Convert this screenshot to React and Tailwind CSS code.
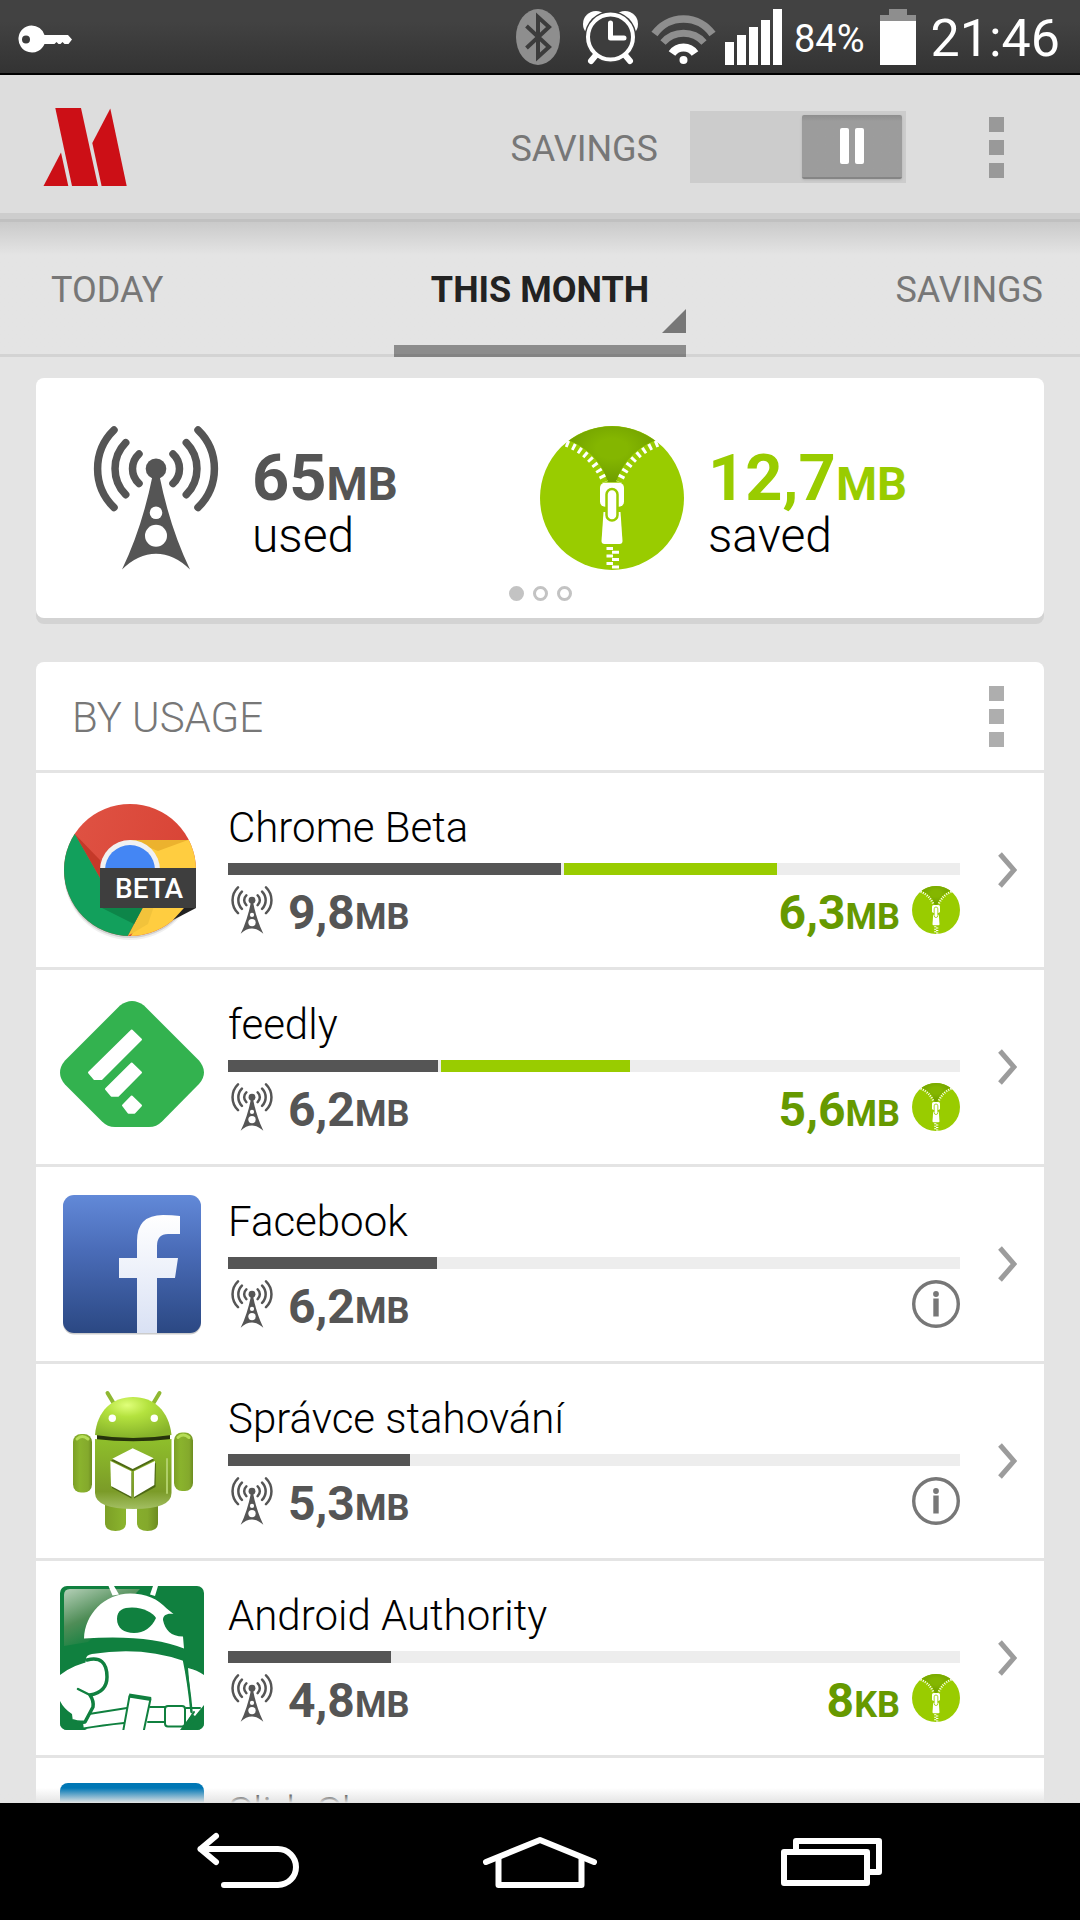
import { useState } from 'react';
import clsx from 'clsx';

const BAR_TOTAL = 732;

const apps = [
    { name: 'Chrome Beta', used: '9,8', usedBar: 333, saved: '6,3', savedUnit: 'MB', savedBar: 213, icon: ChromeBetaIcon },
    { name: 'feedly', used: '6,2', usedBar: 210, saved: '5,6', savedUnit: 'MB', savedBar: 189, icon: FeedlyIcon },
    { name: 'Facebook', used: '6,2', usedBar: 209, icon: FacebookIcon },
    { name: 'Správce stahování', used: '5,3', usedBar: 182, icon: DownloadsIcon },
    { name: 'Android Authority', used: '4,8', usedBar: 163, saved: '8', savedUnit: 'KB', icon: AuthorityIcon },
    { name: 'SlideShare', icon: SlideShareIcon },
];

const tabs = ['TODAY', 'THIS MONTH', 'SAVINGS'];

export default function App() {
    return (
        <div className="flex h-screen flex-col overflow-hidden bg-[#e4e4e4] font-['Roboto',sans-serif] text-black">
            <StatusBar />
            <Header />
            <Tabs />
            <main className="relative min-h-0 flex-1 overflow-hidden px-9 pt-[21px]">
                <Summary />
                <UsageList />
                <div className="absolute inset-x-0 bottom-0 h-[15px] bg-linear-to-b from-transparent to-[#e4e4e4]" />
            </main>
            <SystemNav />
        </div>
    );
}

function StatusBar() {
    return (
        <div className="flex h-[75px] shrink-0 items-center justify-between border-b-2 border-black bg-linear-to-b from-[#424242] from-30% to-[#333] pr-5 pl-4 text-white">
            <svg width="56" height="30" viewBox="0 0 56 30" className="mt-1" role="img" aria-label="VPN">
                <path
                    d="M15.500 1.500a13.500 13.500 0 0 1 13 9.500H52l4 4.500-3.500 4.500h-4l-2-2-2 2h-2l-2-2-2 2H28.500A13.500 13.500 0 1 1 15.500 1.500ZM10 11.500a4 4 0 1 0 0 8 4 4 0 0 0 0-8Z"
                    fill="#fff"
                    fillRule="evenodd"
                />
            </svg>
            <div className="flex items-center">
                <svg width="44" height="56" viewBox="0 0 44 56" role="img" aria-label="Bluetooth">
                    <ellipse cx="22" cy="28" rx="22" ry="28" fill="#8e8e8e" />
                    <path d="M10.500 17 33 38 22 48V8l11 10-22.500 21" fill="none" stroke="#3c3c3c" strokeWidth="4" />
                </svg>
                <svg width="55" height="56" viewBox="0 -2 55 56" className="ml-[23px]" role="img" aria-label="Alarm">
                    <circle cx="13" cy="13" r="13" fill="#fff" />
                    <circle cx="42" cy="13" r="13" fill="#fff" />
                    <circle cx="27.500" cy="26" r="26" fill="#3d3d3d" />
                    <path d="m13 44-5 6M42 44l5 6" stroke="#fff" strokeWidth="6" strokeLinecap="round" />
                    <circle cx="27.500" cy="26" r="22.500" fill="#3d3d3d" stroke="#fff" strokeWidth="4" />
                    <path d="M27.500 12v15H41" fill="none" stroke="#fff" strokeWidth="5" strokeLinecap="round" strokeLinejoin="round" />
                </svg>
                <svg width="65" height="56" viewBox="0 -7 65 56" className="ml-[13px]" fill="none" role="img" aria-label="Wi-Fi">
                    <path d="M3.500 18a35.500 35.500 0 0 1 58 0" stroke="#8e8e8e" strokeWidth="7.500" />
                    <path d="M12 26.500a27.500 27.500 0 0 1 41 0" stroke="#8e8e8e" strokeWidth="7" />
                    <path d="M21 37.500a14 14 0 0 1 23 0" stroke="#fff" strokeWidth="8" />
                    <circle cx="32.500" cy="44" r="4" fill="#fff" />
                </svg>
                <svg width="57" height="56" viewBox="0 0 57 56" className="ml-[9px]" fill="#fff" role="img" aria-label="Signal">
                    <path d="M0 33h9v23H0zM12 26h9v30h-9zM24 18h9v38h-9zM36 11h9v45h-9zM48 0h9v56h-9z" />
                </svg>
                <span className="ml-3 pt-1 text-[38px] leading-[56px]">84%</span>
                <svg width="36" height="56" viewBox="0 0 36 56" className="ml-[15px]" role="img" aria-label="Battery">
                    <path d="M9 0h18v6h9v6H0V6h9Z" fill="#8e8e8e" />
                    <path d="M0 12h36v44H0z" fill="#fff" />
                </svg>
                <span className="ml-[15px] pt-1 text-[52px] leading-[56px]">21:46</span>
            </div>
        </div>
    );
}

function Header() {
    const [on, setOn] = useState(true);

    return (
        <header className="flex h-[144px] shrink-0 items-center justify-between border-b-6 border-[#cdcdcd] bg-[#ddd] pt-1.5 pr-[68px] pl-9">
            <svg width="96" height="78" viewBox="0 0 96 78" fill="#cc0f16" role="img" aria-label="Opera Max">
                <path d="M19.300 0H45L62 78H36Z" />
                <path d="M25 44.500 32.300 78H7.500Z" />
                <path d="M74.300.5 90.700 78H65.600L56.300 35Z" />
            </svg>
            <div className="flex items-center">
                <label className="flex cursor-pointer items-center gap-8">
                    <span className="pt-1 text-[36px] leading-[48px] text-[#777]">SAVINGS</span>
                    <input
                        type="checkbox"
                        role="switch"
                        className="peer sr-only"
                        checked={on}
                        onChange={(e) => setOn(e.target.checked)}
                    />
                    <span className="flex h-[72px] w-[216px] bg-[#ccc] p-1 peer-checked:justify-end">
                        <span className="flex h-16 w-[100px] items-center justify-center gap-1.5 rounded-xs border-b-2 border-[#858585] bg-linear-to-b from-[#8e8e8e] to-[#9c9c9c] to-10% shadow-sm">
                            <span className="h-9 w-[9px] rounded-xs bg-white" />
                            <span className="h-9 w-[9px] rounded-xs bg-white" />
                        </span>
                    </span>
                </label>
                <MenuButton label="More options" className="ml-[75px] text-[#999]" />
            </div>
        </header>
    );
}

function MenuButton({ label, className }) {
    return (
        <button type="button" aria-label={label} className={clsx('flex flex-col gap-2 px-2', className)}>
            <span className="size-[15px] bg-current" />
            <span className="size-[15px] bg-current" />
            <span className="size-[15px] bg-current" />
        </button>
    );
}

function Tabs() {
    const [active, setActive] = useState('THIS MONTH');

    return (
        <div className="h-[138px] shrink-0 border-t-3 border-b-3 border-t-[#c0c0c0] border-b-[#d3d3d3] bg-linear-to-b from-[#cacaca] to-[#e4e4e4] to-[33px]">
            <div role="tablist" className="grid h-[135px] grid-cols-[1fr_292px_1fr]">
                {tabs.map((tab, i) => (
                    <button
                        key={tab}
                        type="button"
                        role="tab"
                        aria-selected={tab === active}
                        onClick={() => setActive(tab)}
                        className={clsx(
                            'relative text-[36px] leading-[48px]',
                            i === 0 && 'pl-[51px] text-left',
                            i === 2 && 'pr-[37px] text-right',
                            tab === active ? 'font-bold text-[#222]' : 'text-[#777]'
                        )}
                    >
                        {tab}
                        {tab === active && (
                            <>
                                <svg width="24" height="24" viewBox="0 0 24 24" className="absolute right-0 bottom-6" aria-hidden="true">
                                    <path d="M24 0v24H0Z" fill="#777" />
                                </svg>
                                <span className="absolute inset-x-0 bottom-0 h-3 border-b-3 border-[#838383] bg-[#8c8c8c]" />
                            </>
                        )}
                    </button>
                ))}
            </div>
        </div>
    );
}

function Summary() {
    const [page, setPage] = useState(0);

    return (
        <section className="rounded-lg bg-white pt-12 pb-[17px] shadow-[0_6px_0_#d3d3d3]">
            <div className="grid grid-cols-2">
                <div className="flex gap-6 pl-12">
                    <AntennaIcon className="size-[144px]" />
                    <div className="pt-5">
                        <p className="text-[65px] leading-[65px] font-bold text-[#555]">
                            65<span className="text-[47px] leading-none">MB</span>
                        </p>
                        <p className="text-[48px] leading-[50px] font-light">used</p>
                    </div>
                </div>
                <div className="flex gap-6">
                    <ZipperIcon className="size-[144px]" />
                    <div className="pt-5">
                        <p className="text-[65px] leading-[65px] font-bold text-[#9c0]">
                            12,7<span className="text-[47px] leading-none">MB</span>
                        </p>
                        <p className="text-[48px] leading-[50px] font-light">saved</p>
                    </div>
                </div>
            </div>
            <div className="mt-4 flex justify-center gap-[9px]">
                {[0, 1, 2].map((n) => (
                    <button
                        key={n}
                        type="button"
                        aria-label={`Page ${n + 1}`}
                        onClick={() => setPage(n)}
                        className={clsx('size-[15px] rounded-full border-3 border-[#c3c3c3]', n === page && 'bg-[#c3c3c3]')}
                    />
                ))}
            </div>
        </section>
    );
}

function UsageList() {
    return (
        <section className="mt-11 rounded-t-lg bg-white">
            <div className="flex h-[108px] items-center justify-between pr-8 pl-9">
                <h2 className="pt-1 text-[42px] leading-[60px] font-light text-[#777]">BY USAGE</h2>
                <MenuButton label="List options" className="text-[#aeaeae]" />
            </div>
            <ul>
                {apps.map((app) => (
                    <UsageRow key={app.name} app={app} />
                ))}
            </ul>
        </section>
    );
}

function UsageRow({ app }) {
    const Icon = app.icon;

    return (
        <li className="border-t-3 border-[#e4e4e4]">
            <a href="#" className="flex h-[194px] items-center gap-6 pr-[27px] pl-6">
                <Icon />
                <div className="h-[144px] min-w-0 flex-1">
                    <p className="truncate text-[42px] leading-[60px] font-light">{app.name}</p>
                    {app.used && <Usage app={app} />}
                </div>
                <svg width="33" height="40" viewBox="0 0 33 40" className="shrink-0" fill="none" aria-hidden="true">
                    <path d="m16 4 14 16-14 16" stroke="#9c9c9c" strokeWidth="5" />
                </svg>
            </a>
        </li>
    );
}

function Usage({ app }) {
    return (
        <>
            <div className="mt-[5px] flex h-3 gap-[3px] bg-[#ededed]">
                <div className="bg-[#555]" style={{ width: `${(app.usedBar / BAR_TOTAL) * 100}%` }} />
                {app.savedBar && (
                    <div className="bg-[#9c0]" style={{ width: `${(app.savedBar / BAR_TOTAL) * 100}%` }} />
                )}
            </div>
            <div className="mt-[11px] flex items-start gap-3">
                <AntennaIcon className="size-12" />
                <Amount value={app.used} unit="MB" className="text-[#555]" />
                <span className="flex-1" />
                {app.saved ? (
                    <>
                        <Amount value={app.saved} unit={app.savedUnit} className="text-[#690]" />
                        <ZipperIcon className="size-12" />
                    </>
                ) : (
                    <InfoIcon />
                )}
            </div>
        </>
    );
}

function Amount({ value, unit, className }) {
    return (
        <span className={clsx('text-[48px] leading-[54px] font-bold', className)}>
            {value}
            <span className="text-[36px]">{unit}</span>
        </span>
    );
}

function AntennaIcon({ className }) {
    return (
        <svg viewBox="0 0 144 144" className={clsx('shrink-0', className)} role="img" aria-label="Data used">
            <g fill="none" stroke="#555" strokeWidth="7.500" strokeLinecap="round">
                <path d="M30 4a54 54 0 0 0 0 77.500M41.700 16.700a37 37 0 0 0 0 52M55 28a20 20 0 0 0 0 29.500" />
                <path d="M114 4a54 54 0 0 1 0 77.500M102.300 16.700a37 37 0 0 1 0 52M89 28a20 20 0 0 1 0 29.500" />
            </g>
            <circle cx="72" cy="42.700" r="10.300" fill="#555" />
            <path d="M68.500 50h7Q86 102 106 143.500 90 127.700 72 127.700T38 143.500Q58 102 68.500 50Z" fill="#555" />
            <circle cx="72" cy="86.700" r="6.300" fill="#fff" />
            <circle cx="72" cy="109.700" r="11" fill="#fff" />
        </svg>
    );
}

function ZipperIcon({ className }) {
    return (
        <svg viewBox="0 0 144 144" className={clsx('shrink-0', className)} role="img" aria-label="Data saved">
            <defs>
                <radialGradient id="zip-open" cx="0.5" cy="0.4" r="0.6">
                    <stop offset="0.3" stopColor="#84b600" />
                    <stop offset="1" stopColor="#6f9e00" />
                </radialGradient>
            </defs>
            <circle cx="72" cy="72" r="72" fill="#9c0" />
            <path d="M29 14.500Q58 26 68 56h8Q86 26 115 14.500A72 72 0 0 0 29 14.500Z" fill="url(#zip-open)" />
            <g fill="none" stroke="#fff" strokeWidth="6.500" strokeDasharray="3 4">
                <path d="M26 17.500Q52 27 65 56" />
                <path d="M118 17.500Q92 27 79 56" />
            </g>
            <rect x="60" y="56.700" width="24" height="24" rx="5" fill="#fff" />
            <path d="M63.500 86h17l2 29q0 3-3 3h-15q-3 0-3-3Z" fill="#fff" />
            <rect x="66.500" y="63" width="11" height="31.500" rx="5.500" fill="#fff" stroke="#9c0" strokeWidth="2.500" />
            <path
                d="M66.500 121H73v3h-6.500zM66.500 128.500H73v3h-6.500zM66.500 136H73v3h-6.500zM72 124.700h7v3h-7zM72 132h7v3h-7zM72 139.500h7v3h-7z"
                fill="#fff"
            />
        </svg>
    );
}

function InfoIcon() {
    return (
        <svg viewBox="0 0 48 48" className="size-12 shrink-0" role="img" aria-label="Info">
            <circle cx="24" cy="24" r="22.300" fill="none" stroke="#777" strokeWidth="3.400" />
            <circle cx="24" cy="14" r="2.900" fill="#777" />
            <path d="M21.300 18.500h5.400v18h-5.400z" fill="#777" />
        </svg>
    );
}

function ChromeBetaIcon() {
    return (
        <svg viewBox="0 0 144 144" className="size-[144px] shrink-0" aria-hidden="true">
            <defs>
                <clipPath id="chrome-disc">
                    <circle cx="70" cy="72" r="66" />
                </clipPath>
                <linearGradient id="chrome-red" x2="1" y2="0.3">
                    <stop offset="0" stopColor="#e05445" />
                    <stop offset="1" stopColor="#d84335" />
                </linearGradient>
            </defs>
            <circle cx="70" cy="74" r="66" fill="#000" opacity="0.12" />
            <circle cx="70" cy="76" r="66" fill="#000" opacity="0.06" />
            <g clipPath="url(#chrome-disc)">
                <path d="M0 0h144v144H0z" fill="url(#chrome-red)" />
                <path d="M14.800 36 40 80V62Z" fill="#c53929" />
                <path d="M70 42h74v102H67.800l30-57Z" fill="#ffcd40" />
                <path d="M70 42h58L98 53Z" fill="#ecb22e" />
                <path d="M82.600 110 67.800 138 88 126l6-18Z" fill="#f2c33b" />
                <path d="M14.800 36 0 36v108h64.500L83 109 40 80Z" fill="#12a05c" />
                <path d="M40 109h43L74 126Z" fill="#0d8549" />
            </g>
            <circle cx="70" cy="72" r="30" fill="#f1f1f1" />
            <circle cx="70" cy="72" r="25" fill="#4486f4" />
            <path d="M40 70h96v40H40z" fill="#3e3e3e" />
            <path d="M136 110h-12l-11 12Z" fill="#212121" />
            <text x="55" y="99.500" fill="#fff" fontSize="28" fontWeight="500">
                BETA
            </text>
        </svg>
    );
}

function FeedlyIcon() {
    return (
        <svg viewBox="0 0 144 144" className="size-[144px] shrink-0" aria-hidden="true">
            <path
                d="M60 10.500q12-9 24 0L139 65.500q10 12 0 23.500L102 126.500q-5.500 5.500-13 5.500H55q-7.500 0-13-5.500L5 89.500q-10-12 0-24Z"
                fill="#33b24f"
            />
            <g fill="#fff" stroke="#fff" strokeWidth="2" strokeLinejoin="round">
                <path d="M71.700 35.500 81 44.500 41.500 84h-7L29 77.500Z" />
                <path d="M71.700 68.500 81 77.500 58 100.700h-6.500L46 94Z" />
                <path d="M71.700 101.500 81 110.500 74.500 117.700h-6L63 110.500Z" />
            </g>
        </svg>
    );
}

function FacebookIcon() {
    return (
        <svg viewBox="0 0 144 144" className="size-[144px] shrink-0" aria-hidden="true">
            <defs>
                <linearGradient id="fb-bg" x2="0" y2="1">
                    <stop offset="0" stopColor="#6289d8" />
                    <stop offset="0.4" stopColor="#4a6cb8" />
                    <stop offset="1" stopColor="#2b4883" />
                </linearGradient>
                <linearGradient id="fb-mark" x2="0" y2="1">
                    <stop offset="0" stopColor="#fff" />
                    <stop offset="1" stopColor="#d9e1f4" />
                </linearGradient>
            </defs>
            <rect x="3" y="4.500" width="138" height="138" rx="11" fill="#000" opacity="0.2" />
            <rect x="3" y="3" width="138" height="138" rx="11" fill="url(#fb-bg)" />
            <path
                d="M120 24v18h-12q-11 0-11 12v12h21l-3 20H97v55H77V86H59V66h18V49Q77 23 103 23Q112 23 120 24Z"
                fill="url(#fb-mark)"
            />
        </svg>
    );
}

function DownloadsIcon() {
    return (
        <svg viewBox="0 0 144 144" className="size-[144px] shrink-0" aria-hidden="true">
            <defs>
                <linearGradient id="droid-limb" x2="1" y2="0">
                    <stop offset="0" stopColor="#7c9f26" />
                    <stop offset="0.35" stopColor="#8ab32d" />
                    <stop offset="0.8" stopColor="#84a92c" />
                    <stop offset="1" stopColor="#6c8c20" />
                </linearGradient>
                <linearGradient id="droid-body" x2="0" y2="1">
                    <stop offset="0" stopColor="#8fbf2b" />
                    <stop offset="0.75" stopColor="#7b9b28" />
                    <stop offset="1" stopColor="#a3bf63" />
                </linearGradient>
                <radialGradient id="droid-head" cx="0.42" cy="0.2" r="0.8">
                    <stop offset="0" stopColor="#e0ff7a" />
                    <stop offset="0.35" stopColor="#b4e23e" />
                    <stop offset="1" stopColor="#86b22a" />
                </radialGradient>
            </defs>
            <path d="m47.500 4 6 10M99.500 4l-6 10" stroke="#8fb832" strokeWidth="4" strokeLinecap="round" />
            <path d="M45 112h21v22q0 8-10.500 8T45 134ZM77 112h21v22q0 8-10.500 8T77 134Z" fill="url(#droid-limb)" />
            <rect x="13" y="45" width="19" height="58.500" rx="8" fill="url(#droid-limb)" />
            <rect x="114" y="43.500" width="19" height="58.500" rx="8" fill="url(#droid-limb)" />
            <path d="M17 50q5-5 11 0M118 48.500q5-5 11 0" stroke="#b6dd57" strokeWidth="3" fill="none" strokeLinecap="round" />
            <path d="M37 44h73v9H37z" fill="#26330b" />
            <path d="M35 50q38 4.500 76.500 0V104q0 16-38 16T35 104Z" fill="url(#droid-body)" />
            <path d="M35 46C37 22 52 8 73 8s36 14 38.500 38Q73 52 35 46Z" fill="url(#droid-head)" />
            <path d="M107 70v34" stroke="#b0cf68" strokeWidth="2" strokeLinecap="round" />
            <circle cx="52.300" cy="29.300" r="3.700" fill="#fff" />
            <circle cx="94.300" cy="29.300" r="3.700" fill="#fff" />
            <g fill="#4d6815">
                <path d="M72.700 61 94.500 71 72.700 82 51 71.500ZM51 74l20.500 10v25.500L52 99ZM96 74 74 84v25.500L95.500 98Z" />
            </g>
            <g fill="#fff">
                <path d="M72.700 59.300 93.700 69.300 72.700 80 52.300 69.700Z" />
                <path d="m50.300 72 21 10.300v25.400L51 97Z" />
                <path d="M95 72 74 82.300V108l20.300-12Z" />
            </g>
        </svg>
    );
}

function AuthorityIcon() {
    return (
        <svg viewBox="0 0 144 144" className="size-[144px] shrink-0" aria-hidden="true">
            <defs>
                <clipPath id="authority-tile">
                    <rect width="144" height="144" rx="7" />
                </clipPath>
                <linearGradient id="authority-gloss" x2="0.6" y2="1">
                    <stop offset="0" stopColor="#b5d0b8" />
                    <stop offset="0.5" stopColor="#4f8d57" />
                    <stop offset="0.9" stopColor="#10803f" />
                </linearGradient>
            </defs>
            <g clipPath="url(#authority-tile)" strokeLinejoin="round">
                <path d="M0 0h144v144H0z" fill="#10803f" />
                <path d="M4 60V9q0-6 6-6h70L28 56Z" fill="url(#authority-gloss)" />
                <path d="m48.500 0 4 9.500 6.500-1L54 0ZM93 0h5l-3 10-5-1.500Z" fill="#fff" />
                <path
                    d="M24 52.500C25 28 44 8 70 7.500 86 7.500 98 13 106.700 22.500L113.500 28C107 27 103 29 103 34 105 44 111 50.500 123 50.500L124 62.500Q88 48 24 52.500Z"
                    fill="#fff"
                />
                <path d="M57 33C57 24 63 21.500 72 21.500 84 21.500 93 27 96 32 92 41 84 47 74 47 64 47 57 42 57 33Z" fill="#10803f" />
                <path d="M26 73q0-4 6-5 50-8 92 7l8 53-12 16H24l-4-30Z" fill="#fff" />
                <path d="M128 82q9 2 16 7v30q-5 6-9 11l-3-2Z" fill="#fff" />
                <path d="M0 89q14-11 33-14 12 5 12 16 1 13-16 18 4 8 2 14l-8 13H13l-1-8q-8-5-12-13Z" fill="#fff" />
                <g fill="none" stroke="#10803f" strokeLinecap="round">
                    <path d="M27 74q20-5 20 17 0 15-17 18 4 6 3 12l-8 15q-6 1-12-1" strokeWidth="3.500" />
                    <path d="m18 103 12 6M124 74q5 24 7.500 52" strokeWidth="2.500" />
                    <path d="m29 128 38-6M20 143q24-4 44-6M90 121h16M88 136h18M126 122h14M134 126l-8 13" strokeWidth="2" />
                </g>
                <g fill="#fff" stroke="#10803f" strokeWidth="2">
                    <path d="m69.500 110 21 3-7 33H63Z" />
                    <rect x="105" y="120" width="20" height="20.500" rx="3" />
                </g>
                <path d="M69 109.500 91 113" stroke="#10803f" strokeWidth="4" />
                <path d="M0 117q10 20 27 27H0ZM144 121q-8 17-22 23h22Z" fill="#10803f" />
            </g>
        </svg>
    );
}

function SlideShareIcon() {
    return <span className="size-[144px] shrink-0 rounded-lg bg-[#0077b5]" />;
}

function SystemNav() {
    return (
        <nav className="flex h-[117px] shrink-0 justify-center bg-black px-[102px]">
            <button type="button" aria-label="Back" className="flex flex-1 items-center justify-center">
                <svg width="120" height="61" viewBox="0 0 120 61" fill="none" stroke="#fff" strokeWidth="6" strokeLinecap="round" strokeLinejoin="round">
                    <path d="M28 5 12.500 18 28 31M12.500 18H90a18 18 0 0 1 0 36H36" />
                </svg>
            </button>
            <button type="button" aria-label="Home" className="flex flex-1 items-center justify-center">
                <svg width="120" height="61" viewBox="0 0 120 61" fill="none" stroke="#fff" strokeWidth="6" strokeLinecap="round" strokeLinejoin="round">
                    <path d="m6 31 54-22 54 22" />
                    <path d="M18.500 28v26h83V28" />
                </svg>
            </button>
            <button type="button" aria-label="Recent apps" className="flex flex-1 items-center justify-center">
                <svg width="120" height="61" viewBox="0 0 120 61" fill="none" stroke="#fff" strokeWidth="6" strokeLinejoin="round">
                    <path d="M12 21h83v31H12z" />
                    <path d="M24 21V10h83v31H95" />
                </svg>
            </button>
        </nav>
    );
}
